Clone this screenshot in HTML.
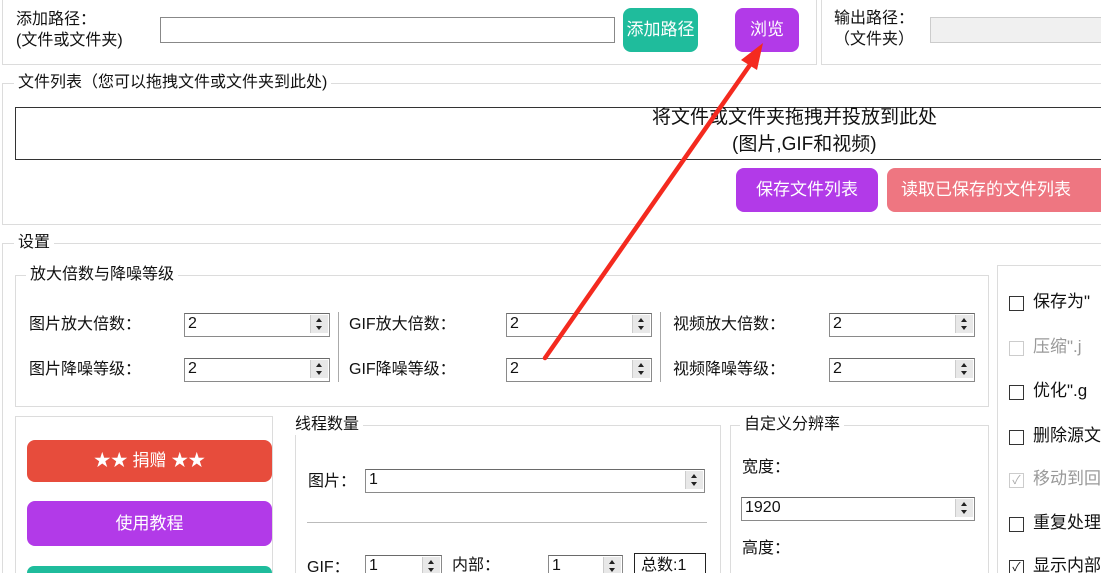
<!DOCTYPE html>
<html style="width:1101px;height:573px;overflow:hidden"><head><meta charset="utf-8"><style>
body{margin:0;width:1101px;height:573px;overflow:hidden;background:#fff;position:relative;font-family:"Liberation Sans","Noto Sans CJK SC",sans-serif;font-size:16px;color:#111}
.a{position:absolute}
.g{position:absolute;border:1px solid #dcdcdc}
.gl{position:absolute;background:#fff;padding:0 4px;line-height:20px;font-size:16px}
.t{position:absolute;line-height:20px;white-space:nowrap}
.btn{position:absolute;border-radius:8px;color:#fff;text-align:center;font-size:17px}
.sp{position:absolute;border:1px solid #8a8a8a;border-top-color:#6a6a6a;height:22px;background:#fff;box-sizing:border-box;font-size:16px;line-height:20px;padding-left:3px}
.sp .s{position:absolute;right:1px;top:1px;width:17px;height:18px;background:#e8e8e8;border-left:1px solid #ccc}
.sp .s:before{content:"";position:absolute;left:5px;top:3px;border:3.5px solid transparent;border-bottom:4px solid #222;border-top:0}
.sp .s:after{content:"";position:absolute;left:5px;top:11px;border:3.5px solid transparent;border-top:4px solid #222;border-bottom:0}
.cb{position:absolute;left:1009px;width:13px;height:13px;border:1px solid #333}
.ct{position:absolute;left:1033px;line-height:20px;font-size:17px;white-space:nowrap}
</style></head><body>
<div class="g" style="left:2px;top:-5px;width:813px;height:68px"></div>
<div class="t" style="left:16px;top:10px">添加路径：</div>
<div class="t" style="left:16px;top:31px">(文件或文件夹)</div>
<div class="a" style="left:160px;top:17px;width:453px;height:24px;border:1px solid #888"></div>
<div class="btn" style="left:623px;top:8px;width:75px;height:44px;line-height:44px;background:#1fbc9c">添加路径</div>
<div class="btn" style="left:735px;top:8px;width:64px;height:44px;line-height:44px;background:#b23ae8">浏览</div>
<div class="g" style="left:821px;top:-5px;width:290px;height:68px"></div>
<div class="t" style="left:834px;top:9px">输出路径：</div>
<div class="t" style="left:834px;top:30px">（文件夹）</div>
<div class="a" style="left:930px;top:17px;width:180px;height:24px;border:1px solid #ccc;background:#f0f0f0"></div>

<div class="g" style="left:2px;top:83px;width:1110px;height:140px"></div>
<div class="gl" style="left:14px;top:73px">文件列表（您可以拖拽文件或文件夹到此处)</div>
<div class="a" style="left:15px;top:107px;width:1100px;height:51px;border:1px solid #333"></div>
<div class="t" style="left:652px;top:108px;font-size:19px">将文件或文件夹拖拽并投放到此处</div>
<div class="t" style="left:732px;top:135px;font-size:19px">(图片,GIF和视频)</div>
<div class="btn" style="left:736px;top:168px;width:142px;height:44px;line-height:44px;background:#b23ae8">保存文件列表</div>
<div class="btn" style="left:887px;top:168px;width:230px;height:44px;line-height:44px;background:#ee7681;text-align:left;padding-left:14px;box-sizing:border-box">读取已保存的文件列表</div>

<div class="g" style="left:2px;top:243px;width:1110px;height:340px"></div>
<div class="gl" style="left:14px;top:233px">设置</div>
<div class="g" style="left:15px;top:275px;width:972px;height:130px"></div>
<div class="gl" style="left:26px;top:265px">放大倍数与降噪等级</div>
<div class="t" style="left:29px;top:315px">图片放大倍数：</div>
<div class="t" style="left:29px;top:360px">图片降噪等级：</div>
<div class="sp" style="left:184px;top:313px;width:146px;height:24px">2<div class="s"></div></div>
<div class="sp" style="left:184px;top:358px;width:146px;height:24px">2<div class="s"></div></div>
<div class="a" style="left:338px;top:312px;width:1px;height:70px;background:#aaa"></div>
<div class="t" style="left:349px;top:315px">GIF放大倍数：</div>
<div class="t" style="left:349px;top:360px">GIF降噪等级：</div>
<div class="sp" style="left:506px;top:313px;width:146px;height:24px">2<div class="s"></div></div>
<div class="sp" style="left:506px;top:358px;width:146px;height:24px">2<div class="s"></div></div>
<div class="a" style="left:660px;top:312px;width:1px;height:70px;background:#aaa"></div>
<div class="t" style="left:673px;top:315px">视频放大倍数：</div>
<div class="t" style="left:673px;top:360px">视频降噪等级：</div>
<div class="sp" style="left:829px;top:313px;width:146px;height:24px">2<div class="s"></div></div>
<div class="sp" style="left:829px;top:358px;width:146px;height:24px">2<div class="s"></div></div>

<div class="g" style="left:15px;top:416px;width:256px;height:170px"></div>
<div class="btn" style="left:27px;top:440px;width:245px;height:42px;line-height:42px;background:#e74c3c">★★ 捐赠 ★★</div>
<div class="btn" style="left:27px;top:501px;width:245px;height:45px;line-height:45px;background:#b23ae8">使用教程</div>
<div class="btn" style="left:27px;top:566px;width:245px;height:7px;border-radius:8px 8px 0 0;background:#1fbc9c"></div>

<div class="g" style="left:295px;top:425px;width:424px;height:160px"></div>
<div class="gl" style="left:291px;top:415px">线程数量</div>
<div class="t" style="left:308px;top:472px">图片：</div>
<div class="sp" style="left:365px;top:469px;width:340px;height:24px">1<div class="s"></div></div>
<div class="a" style="left:307px;top:522px;width:400px;height:1px;background:#bbb"></div>
<div class="t" style="left:307px;top:558px">GIF：</div>
<div class="sp" style="left:365px;top:555px;width:77px;height:24px">1<div class="s"></div></div>
<div class="t" style="left:452px;top:556px">内部：</div>
<div class="sp" style="left:548px;top:555px;width:75px;height:24px">1<div class="s"></div></div>
<div class="a" style="left:634px;top:553px;width:72px;height:26px;border:1px solid #222;line-height:24px;padding-left:6px;box-sizing:border-box">总数:1</div>

<div class="g" style="left:730px;top:425px;width:257px;height:160px"></div>
<div class="gl" style="left:740px;top:415px">自定义分辨率</div>
<div class="t" style="left:742px;top:458px">宽度：</div>
<div class="sp" style="left:741px;top:497px;width:234px;height:24px">1920<div class="s"></div></div>
<div class="t" style="left:742px;top:539px">高度：</div>

<div class="g" style="left:997px;top:265px;width:120px;height:320px"></div>
<div class="cb" style="top:296px"></div><div class="ct" style="top:292px">保存为"</div>
<div class="cb" style="top:341px;border-color:#ccc"></div><div class="ct" style="top:337px;color:#999">压缩".j</div>
<div class="cb" style="top:385px"></div><div class="ct" style="top:381px">优化".g</div>
<div class="cb" style="top:430px"></div><div class="ct" style="top:426px">删除源文</div>
<div class="cb" style="top:473px;border-color:#ccc;color:#aaa;font-size:12px;line-height:13px;text-align:center">✓</div><div class="ct" style="top:469px;color:#999">移动到回</div>
<div class="cb" style="top:517px"></div><div class="ct" style="top:513px">重复处理</div>
<div class="cb" style="top:560px;font-size:12px;line-height:13px;text-align:center">✓</div><div class="ct" style="top:556px">显示内部</div>

<svg class="a" style="left:0;top:0" width="1101" height="573">
<line x1="545" y1="358" x2="752" y2="62" stroke="#f42a1f" stroke-width="4.5" stroke-linecap="round"/>
<polygon points="763,43 741,60 757,70" fill="#f42a1f"/>
</svg>
</body></html>
